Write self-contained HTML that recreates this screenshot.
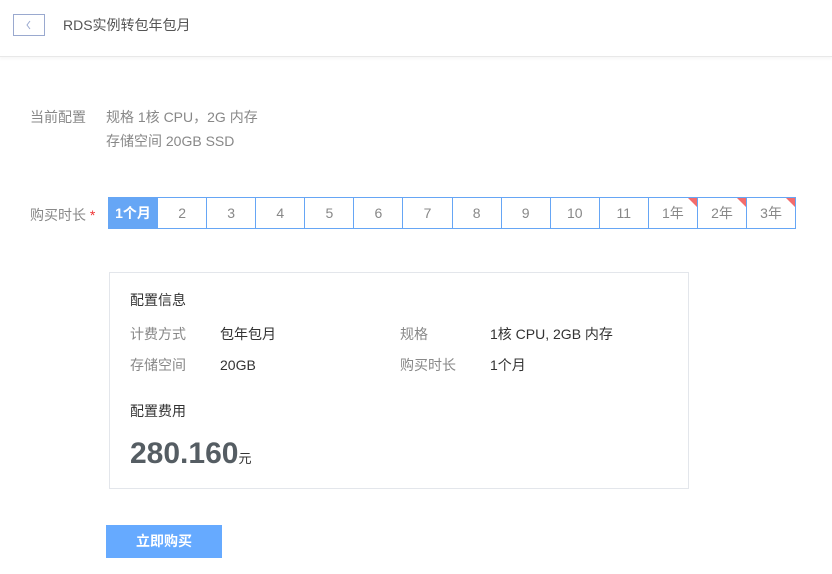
<!DOCTYPE html>
<html><head><meta charset="utf-8"><style>
*{margin:0;padding:0;box-sizing:border-box}
body{width:832px;height:574px;background:#fff;font-family:"Liberation Sans","Noto Sans CJK SC",sans-serif;font-size:14px;color:#333;position:relative;overflow:hidden}
.hd{position:absolute;left:0;top:0;width:832px;height:57px;border-bottom:1px solid #e8e8e8;box-shadow:0 2px 3px rgba(0,0,0,0.04)}
.back{position:absolute;left:13px;top:14px;width:32px;height:22px;border:1px solid #9aa9cf}
.title{position:absolute;left:63px;top:15px;font-size:14px;color:#555;line-height:20px}
.a{position:absolute;line-height:18px}
.g{color:#888}
.tabs{position:absolute;left:108px;top:197px;width:688px;height:32px;border:1px solid #66a6f5;display:flex}
.tabs div{flex:1;border-left:1px solid #66a6f5;text-align:center;line-height:30px;color:#888;position:relative}
.tabs div:first-child{border-left:none;background:#66a6f5;color:#fff;font-weight:bold}
.tabs div.c:after{content:"";position:absolute;right:0;top:0;border-top:9px solid #f36c6c;border-left:9px solid transparent}
.card{position:absolute;left:109px;top:272px;width:580px;height:217px;border:1px solid #e3e6eb}
.btn{position:absolute;left:106px;top:525px;width:116px;height:33px;background:#66aaff;color:#fff;font-weight:bold;text-align:center;line-height:33px;font-size:14px}
</style></head><body>
<div class="hd"><div class="back"><svg width="30" height="20" viewBox="0 0 30 20"><path d="M16 6 L13 10 L16 14" fill="none" stroke="#9aa9cf" stroke-width="1"/></svg></div><div class="title">RDS实例转包年包月</div></div>
<div class="a g" style="left:30px;top:108px">当前配置</div>
<div class="a g" style="left:106px;top:108px">规格 1核 CPU，2G 内存</div>
<div class="a g" style="left:106px;top:132px">存储空间 20GB SSD</div>
<div class="a g" style="left:30px;top:206px">购买时长 <span style="color:#e33">*</span></div>
<div class="tabs"><div>1个月</div><div>2</div><div>3</div><div>4</div><div>5</div><div>6</div><div>7</div><div>8</div><div>9</div><div>10</div><div>11</div><div class="c">1年</div><div class="c">2年</div><div class="c">3年</div></div>
<div class="card">
<div class="a" style="left:20px;top:18px">配置信息</div>
<div class="a g" style="left:20px;top:52px">计费方式</div>
<div class="a" style="left:110px;top:52px">包年包月</div>
<div class="a g" style="left:290px;top:52px">规格</div>
<div class="a" style="left:380px;top:52px">1核 CPU, 2GB 内存</div>
<div class="a g" style="left:20px;top:83px">存储空间</div>
<div class="a" style="left:110px;top:83px">20GB</div>
<div class="a g" style="left:290px;top:83px">购买时长</div>
<div class="a" style="left:380px;top:83px">1个月</div>
<div class="a" style="left:20px;top:129px">配置费用</div>
<div class="a" style="left:20px;top:164px;line-height:34px;font-size:30px;font-weight:bold;color:#555d63">280.160<span style="font-size:13px;font-weight:normal;color:#333">元</span></div>
</div>
<div class="btn">立即购买</div>
</body></html>
